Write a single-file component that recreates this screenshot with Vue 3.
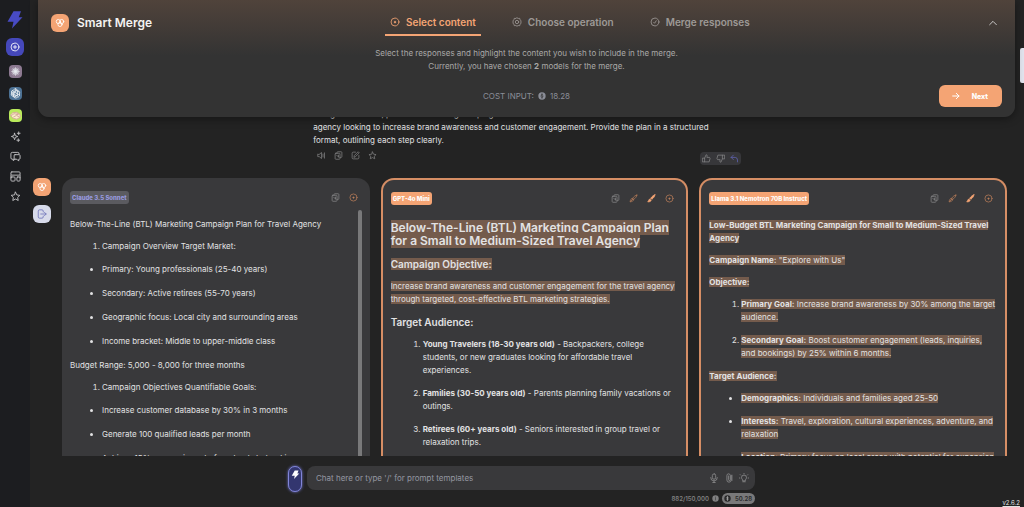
<script setup>
import { ref } from 'vue'

const icons = {
  bolt: '<path fill="currentColor" stroke="none" d="M10 1h10l-3 8h5L8 24l2-9H2z"/>',
  plus: '<circle cx="12" cy="12" r="9.5"/><path d="M12 8v8M8 12h8"/>',
  target: '<circle cx="12" cy="12" r="9.5"/><path stroke-width="3" d="M12 10.500v3M10.500 12h3"/>',
  burst: '<path d="M12 2v20M2 12h20M5 5l14 14M19 5L5 19M8 3l8 18M16 3L8 21M3 8l18 8M3 16l18-8"/>',
  knot: '<path d="M12 2a5 5 0 0 1 4.8 3.6A5 5 0 0 1 20.500 13a5 5 0 0 1-4.500 7 5 5 0 0 1-8.500-1.500A5 5 0 0 1 3.500 11a5 5 0 0 1 4-6.500A5 5 0 0 1 12 2z"/><path d="M8 19V8l5-3 6 3.500M5 9v6l6 3.500 8-5M16 6v10l-5 2.500M8 8l8 4.500M8 13l4-5.500M8 14l8 3"/>',
  eye: '<path fill="#f8efc6" d="M1 11l5-5 9-1 7 5v6l-7 4-8-2z"/><path d="M3 12l6-4 8 2M8 15l6-3 6 3"/><circle cx="16" cy="9" r="1.500"/>',
  sparkles: '<path d="M10 5l1.800 5.200L17 12l-5.200 1.800L10 19l-1.800-5.200L3 12l5.200-1.800zM19 2v6M16 5h6M18 17v6M15 20h6"/>',
  chat: '<path d="M7 18v3l4-3M7 18H5a3 3 0 0 1-3-3V6a3 3 0 0 1 3-3h12a3 3 0 0 1 3 3"/><path d="M11 8h9a2 2 0 0 1 2 2v6a2 2 0 0 1-2 2h-1v4l-4-4h-4a2 2 0 0 1-2-2v-6a2 2 0 0 1 2-2z"/>',
  layout: '<rect x="2" y="2" width="20" height="7" rx="2"/><rect x="2" y="13" width="9" height="9" rx="2"/><rect x="15" y="13" width="7" height="9" rx="2"/><path d="M2 9v6M22 9v6"/>',
  star: '<path d="M12 2.500l2.900 6.100 6.600.9-4.800 4.600 1.200 6.600L12 17.500l-5.900 3.200 1.200-6.600L2.500 9.500l6.600-.9z"/>',
  merge: '<circle cx="8" cy="8.500" r="5"/><circle cx="16" cy="8.500" r="5"/><circle cx="12" cy="15.500" r="5"/>',
  exit: '<path d="M15 7V5a3 3 0 0 0-3-3H6a3 3 0 0 0-3 3v14a3 3 0 0 0 3 3h6a3 3 0 0 0 3-3v-2M9 12h13M18 8l4 4-4 4"/>',
  gear: '<path d="M12 2l3 1.500 3.500-.2 1 3.400L22 9.500 21 12l1 2.500-2.500 2.800-1 3.400-3.500-.2L12 22l-3-1.500-3.500.2-1-3.400L2 14.500 3 12 2 9.500l2.500-2.800 1-3.400 3.500.2z"/><circle cx="12" cy="12" r="4"/>',
  check: '<circle cx="12" cy="12" r="9.500"/><path d="M9 13l2 2L15 9"/>',
  chevron: '<path d="M4 16l8-8 8 8"/>',
  arrow: '<path d="M2 12h19M13 4l8 8-8 8"/>',
  coin: '<circle cx="12" cy="12" r="11" fill="currentColor" stroke="none"/><path class="cut" d="M12 5v14M15 8.500c-1-1.500-6-1.500-6 1s6 2 6 4.500-5 2.500-6.500.5"/>',
  info: '<circle cx="12" cy="12" r="11" fill="currentColor" stroke="none"/><path class="cut" d="M12 11v6M12 7v1"/>',
  sound: '<path d="M2 9v6h4l6 5V4L6 9zM16 8v8M20 5v14"/>',
  copy: '<path d="M8 6V4a2 2 0 0 1 2-2h9a2 2 0 0 1 2 2v11a2 2 0 0 1-2 2h-3"/><rect x="3" y="6" width="13" height="16" rx="2"/><path d="M7 11l5 5M12 11v5"/>',
  edit: '<path d="M12 3H6a3 3 0 0 0-3 3v12a3 3 0 0 0 3 3h12a3 3 0 0 0 3-3v-6M8 16l1-4L19 2l3 3-10 10z"/>',
  up: '<path d="M2 11h5v10H2zM7 11l4-9c3 0 3 2 2 7h7l1.500 3L19 21H7"/>',
  down: '<path d="M22 13h-5V3h5zM17 13l-4 9c-3 0-3-2-2-7H4l-1.500-3L5 3h12"/>',
  back: '<path d="M9 3L3 9l6 6M3 9h11a7 7 0 0 1 6 7v5"/>',
  pen: '<path d="M21 3c-4 0-8 4-12 9l3 3c5-4 9-8 9-12zM9 12c-4 0-5 3-6 9 6-1 9-2 9-6M5 19l6-6"/>',
  brush: '<path fill="currentColor" d="M21 2c-4 1-8 5-11 9l3 3c4-3 8-7 8-12zM8 13c-3 0-3 4-6 8 6 0 9-1 9-5z"/>',
  mic: '<rect x="8" y="2" width="8" height="13" rx="4"/><path d="M4 11a8 8 0 0 0 16 0M12 19v4M9 23h6"/>',
  clip: '<path d="M17 6v11a5 5 0 0 1-10 0V6a4 4 0 0 1 8 0v10a2 2 0 0 1-4 0V7M19 5v13"/>',
  bulb: '<path d="M9 18c0-3-3-4-3-7a6 6 0 0 1 12 0c0 3-3 4-3 7zM9 21h6M12 1v1M3 4l1 1M21 4l-1 1M1 12h1M22 12h1"/>'
}

const nav = [
  { label: 'Assistants', icon: 'sparkles' },
  { label: 'Chats', icon: 'chat' },
  { label: 'Templates', icon: 'layout' },
  { label: 'Favorites', icon: 'star' }
]
const steps = [
  { label: 'Select content', icon: 'target' },
  { label: 'Choose operation', icon: 'gear' },
  { label: 'Merge responses', icon: 'check' }
]
const active = ref(0)
const draft = ref('')
</script>

<template>
  <div class="app">
    <nav class="sidebar" aria-label="Main">
      <a href="#" class="logo" aria-label="Home"><svg viewBox="0 0 24 24" v-html="icons.bolt" /></a>
      <button class="square violet" aria-label="New chat"><svg viewBox="0 0 24 24" v-html="icons.plus" /></button>
      <button class="model claude" aria-label="Claude"><svg viewBox="0 0 24 24" v-html="icons.burst" /></button>
      <button class="model gpt" aria-label="GPT"><svg viewBox="0 0 24 24" v-html="icons.knot" /></button>
      <button class="model llama" aria-label="Nemotron"><svg viewBox="0 0 24 24" v-html="icons.eye" /></button>
      <button v-for="n in nav" :key="n.label" class="bare" :aria-label="n.label">
        <svg viewBox="0 0 24 24" v-html="icons[n.icon]" />
      </button>
    </nav>

    <main class="main">
      <header class="panel">
        <div class="panel-top">
          <div class="title">
            <span class="square orange"><svg viewBox="0 0 24 24" v-html="icons.merge" /></span>
            <h1>Smart Merge</h1>
          </div>
          <div class="tabs">
            <button v-for="(s, i) in steps" :key="s.label" class="tab" :class="{ active: i === active }" @click="active = i">
              <svg viewBox="0 0 24 24" v-html="icons[s.icon]" />{{ s.label }}
            </button>
          </div>
          <button class="collapse" aria-label="Collapse"><svg viewBox="0 0 24 24" v-html="icons.chevron" /></button>
        </div>
        <p class="hint">
          Select the responses and highlight the content you wish to include in the merge.<br />
          Currently, you have chosen <b>2</b> models for the merge.
        </p>
        <div class="panel-foot">
          <span class="cost">COST INPUT: <svg viewBox="0 0 24 24" v-html="icons.coin" /> 18.28</span>
          <button class="next"><svg viewBox="0 0 24 24" v-html="icons.arrow" />Next</button>
        </div>
      </header>

      <section class="conversation">
        <div class="prompt">
          <p>Design a low-cost, practical marketing campaign for a small<br />agency looking to increase brand awareness and customer engagement. Provide the plan in a structured format, outlining each step clearly.</p>
          <div class="prompt-bar">
            <div class="actions">
              <button aria-label="Read aloud"><svg viewBox="0 0 24 24" v-html="icons.sound" /></button>
              <button aria-label="Copy"><svg viewBox="0 0 24 24" v-html="icons.copy" /></button>
              <button aria-label="Edit"><svg viewBox="0 0 24 24" v-html="icons.edit" /></button>
              <button aria-label="Favorite"><svg viewBox="0 0 24 24" v-html="icons.star" /></button>
            </div>
            <div class="feedback">
              <button aria-label="Like"><svg viewBox="0 0 24 24" v-html="icons.up" /></button>
              <button aria-label="Dislike"><svg viewBox="0 0 24 24" v-html="icons.down" /></button>
              <button class="undo" aria-label="Reply"><svg viewBox="0 0 24 24" v-html="icons.back" /></button>
            </div>
          </div>
        </div>

        <div class="responses">
          <div class="rail">
            <button class="square orange" aria-label="Merge"><svg viewBox="0 0 24 24" v-html="icons.merge" /></button>
            <button class="square pale" aria-label="Export"><svg viewBox="0 0 24 24" v-html="icons.exit" /></button>
          </div>

          <article class="card">
            <div class="card-head">
              <span class="chip muted">Claude 3.5 Sonnet</span>
              <div class="tools">
                <button aria-label="Copy"><svg viewBox="0 0 24 24" v-html="icons.copy" /></button>
                <button class="warm" aria-label="Select"><svg viewBox="0 0 24 24" v-html="icons.target" /></button>
              </div>
            </div>
            <div class="card-body">
              <div class="text loose">
                <p>Below-The-Line (BTL) Marketing Campaign Plan for Travel Agency</p>
                <ol><li>Campaign Overview Target Market:</li></ol>
                <ul>
                  <li>Primary: Young professionals (25-40 years)</li>
                  <li>Secondary: Active retirees (55-70 years)</li>
                  <li>Geographic focus: Local city and surrounding areas</li>
                  <li>Income bracket: Middle to upper-middle class</li>
                </ul>
                <p>Budget Range: 5,000 - 8,000 for three months</p>
                <ol><li>Campaign Objectives Quantifiable Goals:</li></ol>
                <ul>
                  <li>Increase customer database by 30% in 3 months</li>
                  <li>Generate 100 qualified leads per month</li>
                  <li>Achieve 15% conversion rate from leads to bookings</li>
                </ul>
              </div>
              <div class="thumb"></div>
            </div>
          </article>

          <article class="card chosen">
            <div class="card-head">
              <span class="chip">GPT-4o Mini</span>
              <div class="tools">
                <button aria-label="Copy"><svg viewBox="0 0 24 24" v-html="icons.copy" /></button>
                <button class="warm" aria-label="Erase highlight"><svg viewBox="0 0 24 24" v-html="icons.pen" /></button>
                <button class="hot" aria-label="Highlight"><svg viewBox="0 0 24 24" v-html="icons.brush" /></button>
                <button class="warm" aria-label="Select"><svg viewBox="0 0 24 24" v-html="icons.target" /></button>
              </div>
            </div>
            <div class="text">
              <h2><mark>Below-The-Line (BTL) Marketing Campaign Plan for a Small to Medium-Sized Travel Agency</mark></h2>
              <h3><mark>Campaign Objective:</mark></h3>
              <p><mark>Increase brand awareness and customer engagement for the travel agency through targeted, cost-effective BTL marketing strategies.</mark></p>
              <h3>Target Audience:</h3>
              <ol>
                <li><b>Young Travelers (18-30 years old)</b> - Backpackers, college students, or new graduates looking for affordable travel experiences.</li>
                <li><b>Families (30-50 years old)</b> - Parents planning family vacations or outings.</li>
                <li><b>Retirees (60+ years old)</b> - Seniors interested in group travel or relaxation trips.</li>
              </ol>
            </div>
          </article>

          <article class="card chosen">
            <div class="card-head">
              <span class="chip">Llama 3.1 Nemotron 70B Instruct</span>
              <div class="tools">
                <button aria-label="Copy"><svg viewBox="0 0 24 24" v-html="icons.copy" /></button>
                <button class="warm" aria-label="Erase highlight"><svg viewBox="0 0 24 24" v-html="icons.pen" /></button>
                <button class="hot" aria-label="Highlight"><svg viewBox="0 0 24 24" v-html="icons.brush" /></button>
                <button class="warm" aria-label="Select"><svg viewBox="0 0 24 24" v-html="icons.target" /></button>
              </div>
            </div>
            <div class="text">
              <p><mark><b>Low-Budget BTL Marketing Campaign for Small to Medium-Sized Travel Agency</b></mark></p>
              <p><mark><b>Campaign Name:</b> "Explore with Us"</mark></p>
              <p><mark><b>Objective:</b></mark></p>
              <ol>
                <li><mark><b>Primary Goal:</b> Increase brand awareness by 30% among the target audience.</mark></li>
                <li><mark><b>Secondary Goal:</b> Boost customer engagement (leads, inquiries, and bookings) by 25% within 6 months.</mark></li>
              </ol>
              <p><mark><b>Target Audience:</b></mark></p>
              <ul>
                <li><mark><b>Demographics:</b> Individuals and families aged 25-50</mark></li>
                <li><mark><b>Interests:</b> Travel, exploration, cultural experiences, adventure, and relaxation</mark></li>
                <li><mark><b>Location:</b> Primary focus on local areas with potential for expansion</mark></li>
              </ul>
            </div>
          </article>
        </div>
      </section>

      <footer class="footer">
        <div class="composer">
          <button class="boost" aria-label="Boost mode"><svg viewBox="0 0 24 24" v-html="icons.bolt" /></button>
          <div class="field">
            <input v-model="draft" type="text" aria-label="Message" placeholder="Chat here or type '/' for prompt templates" />
            <button aria-label="Dictate"><svg viewBox="0 0 24 24" v-html="icons.mic" /></button>
            <button aria-label="Attach"><svg viewBox="0 0 24 24" v-html="icons.clip" /></button>
            <button aria-label="Ideas"><svg viewBox="0 0 24 24" v-html="icons.bulb" /></button>
          </div>
          <div class="usage">
            882/150,000
            <svg viewBox="0 0 24 24" v-html="icons.info" />
            <span class="balance"><svg viewBox="0 0 24 24" v-html="icons.coin" />50.28</span>
          </div>
        </div>
        <a href="#" class="version">v2.6.2</a>
      </footer>
      <div class="page-thumb"></div>
    </main>
  </div>
</template>

<style>
body {
  background: #232323;
}
</style>

<style scoped>
.app {
  display: flex;
  height: 100vh;
  overflow: hidden;
  background: #232323;
  color: #e2e2e3;
  font-family: Inter, "Liberation Sans", sans-serif;
  font-size: 8px;
  line-height: 13px;
}
.app *,
.app *::before {
  box-sizing: border-box;
}
h1, h2, h3, p, ol, ul {
  margin: 0;
}
h1, h2, h3 {
  font-weight: 600;
}
b {
  font-weight: 700;
}
button {
  display: flex;
  align-items: center;
  justify-content: center;
  padding: 0;
  border: 0;
  background: none;
  color: inherit;
  font: inherit;
  cursor: pointer;
}
svg {
  width: 10px;
  height: 10px;
  flex: none;
  fill: none;
  stroke: currentColor;
  stroke-width: 2;
  stroke-linecap: round;
  stroke-linejoin: round;
}
svg :deep(.cut) {
  stroke: #333;
}

/* sidebar */
.sidebar {
  display: flex;
  flex: none;
  flex-direction: column;
  align-items: center;
  gap: 9px;
  width: 30px;
  padding-top: 10px;
  background: #1c1d20;
  color: #c4c4c6;
}
.logo {
  display: flex;
  color: #484bc4;
}
.logo svg {
  width: 18px;
  height: 19px;
}
.square {
  display: flex;
  align-items: center;
  justify-content: center;
  flex: none;
  width: 18px;
  height: 18px;
  border-radius: 6px;
  color: #fff;
}
.orange { background: #f4a474; }
.violet { background: #4548bb; }
.pale { background: #d8dbea; color: #6f74b8; }
.model {
  width: 13px;
  height: 13px;
  border-radius: 4px;
  color: #e9eef2;
}
.model svg {
  width: 11px;
  height: 11px;
}
.claude { background: #8d7a92; }
.claude svg {
  width: 9px;
  height: 9px;
}
.gpt { background: #4d7295; }
.llama { background: #b9ea5b; color: #d7a99a; }
.bare {
  width: 12px;
  height: 11px;
}
.bare svg {
  width: 11px;
  height: 11px;
}

/* merge panel */
.main {
  position: relative;
  display: flex;
  flex: 1;
  flex-direction: column;
  min-width: 0;
}
.panel {
  position: relative;
  z-index: 1;
  flex: none;
  margin: 0 9px 0 8px;
  border-radius: 0 0 11px 11px;
  background: linear-gradient(#50433b, #333 56px);
  box-shadow: 0 2px 8px rgba(0, 0, 0, 0.4);
}
.panel-top {
  display: grid;
  grid-template-columns: 4fr auto 3fr;
  align-items: center;
  padding-top: 10px;
}
.title {
  display: flex;
  align-items: center;
  gap: 8px;
  padding-left: 13px;
}
h1 {
  font-size: 12px;
  line-height: 18px;
  color: #f4f3f2;
}
.tabs {
  display: flex;
  gap: 26px;
}
.tab {
  gap: 6px;
  height: 26px;
  padding: 0 5px;
  border-bottom: 2px solid transparent;
  color: #9d9996;
  font-size: 10px;
  font-weight: 600;
}
.tab.active {
  border-color: #f4a474;
  color: #f4a474;
}
.collapse {
  justify-self: end;
  margin-right: 17px;
}
.hint {
  padding-top: 11px;
  color: #aaa9a8;
  text-align: center;
}
.panel-foot {
  display: grid;
  grid-template-columns: 1fr auto 1fr;
  align-items: center;
  padding: 12px 13px 10px;
}
.cost {
  display: flex;
  align-items: center;
  grid-column: 2;
  gap: 4px;
  color: #8b8e98;
}
.cost svg {
  width: 8px;
  height: 8px;
}
.next {
  justify-self: end;
  gap: 12px;
  height: 22px;
  padding: 0 14px 0 13px;
  border-radius: 6px;
  background: #f4a474;
  color: #fff;
  font-size: 7px;
  font-weight: 800;
}
.next svg {
  width: 8px;
  height: 8px;
  stroke-width: 3;
}

/* conversation */
.conversation {
  flex: 1;
  min-height: 0;
  overflow: hidden;
  margin-top: -9px;
}
.prompt {
  width: 43%;
  margin: 0 auto;
}
.prompt p {
  max-width: 410px;
}
.prompt-bar {
  display: flex;
  justify-content: space-between;
  padding: 2px 0 13px;
}
.actions {
  display: flex;
  gap: 8px;
  height: 13px;
  padding-left: 4px;
  color: #808081;
}
.actions svg,
.feedback svg {
  width: 9px;
  height: 9px;
}
.feedback {
  display: flex;
  gap: 5px;
  margin-top: 3px;
  padding: 2px;
  border-radius: 4px;
  background: #37373a;
  color: #858587;
}
.undo { color: #6165b8; }
.responses {
  display: grid;
  grid-template-columns: 18px repeat(3, minmax(0, 1fr));
  gap: 11px;
  padding: 0 17px 0 3px;
}
.rail {
  display: flex;
  flex-direction: column;
  gap: 9px;
}
.card {
  padding: 13px 8px 0;
  border-radius: 13px 13px 0 0;
  background: #39393b;
}
.chosen {
  padding-top: 12px;
  border: 2px solid #d68e65;
  border-bottom: 0;
}
.card-head {
  display: flex;
  align-items: center;
  justify-content: space-between;
  margin-bottom: 14px;
}
.chip {
  padding: 0 2px;
  border-radius: 3px;
  background: #f4a474;
  color: #fff;
  font-size: 6px;
  font-weight: 800;
}
.muted {
  background: #5b5b60;
  color: #9799df;
}
.tools {
  display: flex;
  gap: 9px;
  padding-right: 4px;
  color: #858587;
}
.tools svg {
  width: 9px;
  height: 9px;
}
.warm { color: #b97d59; }
.hot { color: #f4a474; }
.card-body {
  display: flex;
  justify-content: space-between;
}
.thumb {
  flex: none;
  width: 4px;
  margin-top: -8px;
  border-radius: 2px;
  background: #79797a;
}
.text {
  min-width: 0;
}
h2 {
  margin: 16px 0 11px;
  font-size: 12px;
  line-height: 13px;
}
h3 {
  margin-bottom: 9px;
  font-size: 10px;
  line-height: 13px;
}
.text p {
  margin-bottom: 9px;
}
.text p + h3 {
  margin-top: 10px;
}
ol,
ul {
  padding-left: 32px;
}
li {
  margin-bottom: 10px;
}
.loose ul li {
  margin-bottom: 11px;
}
mark {
  background: #745b4c;
  color: inherit;
}

/* footer */
.footer {
  display: flex;
  flex: none;
  align-items: flex-start;
  justify-content: center;
  position: relative;
  height: 51px;
  padding: 10px 11px 0 0;
  background: #232323;
}
.composer {
  display: grid;
  grid-template-columns: 14px 1fr;
  column-gap: 5px;
  width: 100%;
  max-width: 467px;
}
.boost {
  align-items: flex-start;
  grid-row: 1 / 3;
  height: 26px;
  padding-top: 3px;
  border: 1px solid #8185d8;
  border-radius: 7px;
  background: #33366f;
  box-shadow: 0 0 3px #7377cf;
  color: #fff;
}
.boost svg {
  width: 9px;
  height: 9px;
}
.field {
  display: flex;
  align-items: center;
  gap: 5px;
  height: 24px;
  padding: 0 6px 0 9px;
  border-radius: 8px;
  background: #39393b;
  color: #8b8b8d;
}
input {
  flex: 1;
  min-width: 0;
  padding: 0;
  border: 0;
  outline: 0;
  background: none;
  color: #e2e2e3;
  font: inherit;
}
input::placeholder {
  color: #9497a1;
}
.usage {
  display: flex;
  align-items: center;
  justify-content: flex-end;
  grid-column: 2;
  gap: 3px;
  padding-top: 2px;
  color: #808081;
  font-size: 6px;
  font-weight: 600;
}
.usage svg {
  width: 7px;
  height: 7px;
}
.balance {
  display: flex;
  align-items: center;
  gap: 4px;
  height: 11px;
  padding: 0 3px 0 2px;
  border-radius: 6px;
  background: #79797a;
  color: #29292a;
}
.balance :deep(.cut) { stroke: #bbb; }
.version {
  position: absolute;
  right: 4px;
  bottom: 0;
  color: #e2e2e3;
  font-size: 6px;
  line-height: 9px;
  text-decoration: underline;
}
.page-thumb {
  position: absolute;
  top: 48px;
  right: 0;
  width: 4px;
  height: 35px;
  border-radius: 2px 0 0 2px;
  background: #e1e3ed;
}
</style>
